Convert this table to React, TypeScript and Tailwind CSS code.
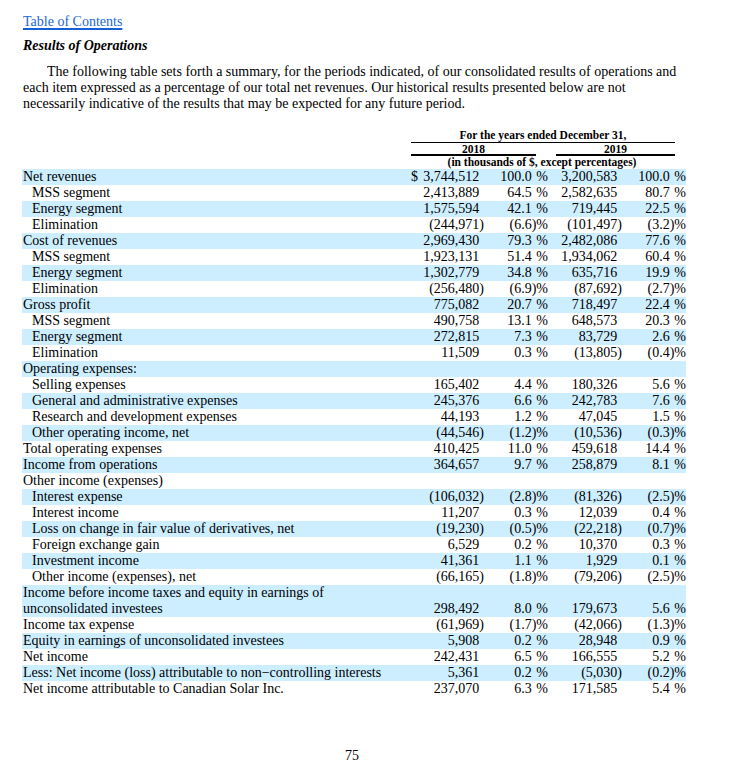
import React from "react";

type Row = {
  label: string;
  indent?: boolean;
  vals?: [string, string, string, string];
  dollar?: boolean;
  twoLine?: boolean;
};

const rows: Row[] = [
  { label: "Net revenues", vals: ["3,744,512", "100.0", "3,200,583", "100.0"], dollar: true },
  { label: "MSS segment", indent: true, vals: ["2,413,889", "64.5", "2,582,635", "80.7"] },
  { label: "Energy segment", indent: true, vals: ["1,575,594", "42.1", "719,445", "22.5"] },
  { label: "Elimination", indent: true, vals: ["(244,971)", "(6.6)", "(101,497)", "(3.2)"] },
  { label: "Cost of revenues", vals: ["2,969,430", "79.3", "2,482,086", "77.6"] },
  { label: "MSS segment", indent: true, vals: ["1,923,131", "51.4", "1,934,062", "60.4"] },
  { label: "Energy segment", indent: true, vals: ["1,302,779", "34.8", "635,716", "19.9"] },
  { label: "Elimination", indent: true, vals: ["(256,480)", "(6.9)", "(87,692)", "(2.7)"] },
  { label: "Gross profit", vals: ["775,082", "20.7", "718,497", "22.4"] },
  { label: "MSS segment", indent: true, vals: ["490,758", "13.1", "648,573", "20.3"] },
  { label: "Energy segment", indent: true, vals: ["272,815", "7.3", "83,729", "2.6"] },
  { label: "Elimination", indent: true, vals: ["11,509", "0.3", "(13,805)", "(0.4)"] },
  { label: "Operating expenses:" },
  { label: "Selling expenses", indent: true, vals: ["165,402", "4.4", "180,326", "5.6"] },
  { label: "General and administrative expenses", indent: true, vals: ["245,376", "6.6", "242,783", "7.6"] },
  { label: "Research and development expenses", indent: true, vals: ["44,193", "1.2", "47,045", "1.5"] },
  { label: "Other operating income, net", indent: true, vals: ["(44,546)", "(1.2)", "(10,536)", "(0.3)"] },
  { label: "Total operating expenses", vals: ["410,425", "11.0", "459,618", "14.4"] },
  { label: "Income from operations", vals: ["364,657", "9.7", "258,879", "8.1"] },
  { label: "Other income (expenses)" },
  { label: "Interest expense", indent: true, vals: ["(106,032)", "(2.8)", "(81,326)", "(2.5)"] },
  { label: "Interest income", indent: true, vals: ["11,207", "0.3", "12,039", "0.4"] },
  { label: "Loss on change in fair value of derivatives, net", indent: true, vals: ["(19,230)", "(0.5)", "(22,218)", "(0.7)"] },
  { label: "Foreign exchange gain", indent: true, vals: ["6,529", "0.2", "10,370", "0.3"] },
  { label: "Investment income", indent: true, vals: ["41,361", "1.1", "1,929", "0.1"] },
  { label: "Other income (expenses), net", indent: true, vals: ["(66,165)", "(1.8)", "(79,206)", "(2.5)"] },
  { label: "Income before income taxes and equity in earnings of\nunconsolidated investees", twoLine: true, vals: ["298,492", "8.0", "179,673", "5.6"] },
  { label: "Income tax expense", vals: ["(61,969)", "(1.7)", "(42,066)", "(1.3)"] },
  { label: "Equity in earnings of unconsolidated investees", vals: ["5,908", "0.2", "28,948", "0.9"] },
  { label: "Net income", vals: ["242,431", "6.5", "166,555", "5.2"] },
  { label: "Less: Net income (loss) attributable to non\u2212controlling interests", vals: ["5,361", "0.2", "(5,030)", "(0.2)"] },
  { label: "Net income attributable to Canadian Solar Inc.", vals: ["237,070", "6.3", "171,585", "5.4"] },
];

function Amt({ v }: { v: string }) {
  if (v.startsWith("(")) return <span>{v}</span>;
  return (
    <span>
      {v}
      <span className="invisible">)</span>
    </span>
  );
}

function Pct({ v }: { v: string }) {
  if (v.startsWith("(")) return <span>{v}%</span>;
  return (
    <span>
      {v}
      <span className="invisible">)</span>%
    </span>
  );
}

export default function App() {
  return (
    <div className="w-[735px] h-[771px] bg-white text-black font-['Liberation_Serif','Times_New_Roman',serif] text-[14px] leading-[16px] pl-[23px] pt-[14px]">
      <div>
        <span className="text-[#2368d6] underline decoration-[#1560d4] decoration-2 underline-offset-[2px]">
          Table of Contents
        </span>
      </div>
      <div className="mt-[8px] font-bold italic">Results of Operations</div>
      <p className="mt-[10px] w-[690px]">
        <span className="inline-block w-[24px]" />
        The following table sets forth a summary, for the periods indicated, of our consolidated results of operations and
        <br />
        each item expressed as a percentage of our total net revenues. Our historical results presented below are not
        <br />
        necessarily indicative of the results that may be expected for any future period.
      </p>

      <div className="mt-[17px] ml-[388px] w-[264px] font-bold text-[11.5px] leading-[13px]">
        <div className="h-[14px] border-b border-black text-center">For the years ended December 31,</div>
        <div className="flex justify-between">
          <div className="w-[125px] h-[13px] border-b-2 border-black text-center leading-[12px]">2018</div>
          <div className="w-[119px] h-[13px] border-b-2 border-black text-center leading-[12px]">2019</div>
        </div>
        <div className="h-[13px] text-center leading-[13px] -ml-[2px]">(in thousands of $, except percentages)</div>
      </div>

      <div className="-ml-[1px] w-[664px] grid grid-cols-[389px_73px_64px_74px_64px]">
        {rows.map((r, i) => {
          const bg = i % 2 === 0 ? "bg-[#cceeff]" : "bg-white";
          const h = r.twoLine ? "h-[32px]" : "h-[16px]";
          const lines = r.label.split("\n");
          return (
            <React.Fragment key={i}>
              <div className={`${bg} ${h} ${r.indent ? "pl-[10px]" : "pl-[1px]"} whitespace-nowrap`}>
                {lines.map((l, j) => (
                  <div key={j}>{l}</div>
                ))}
              </div>
              <div className={`${bg} ${h} flex items-end ${r.dollar ? "justify-between" : "justify-end"}`}>
                {r.dollar && <span>$</span>}
                {r.vals && <Amt v={r.vals[0]} />}
              </div>
              <div className={`${bg} ${h} flex items-end justify-end`}>
                {r.vals && <Pct v={r.vals[1]} />}
              </div>
              <div className={`${bg} ${h} flex items-end justify-end`}>
                {r.vals && <Amt v={r.vals[2]} />}
              </div>
              <div className={`${bg} ${h} flex items-end justify-end`}>
                {r.vals && <Pct v={r.vals[3]} />}
              </div>
            </React.Fragment>
          );
        })}
      </div>

      <div className="mt-[51px] pl-[322px] text-[14px]">75</div>
    </div>
  );
}
